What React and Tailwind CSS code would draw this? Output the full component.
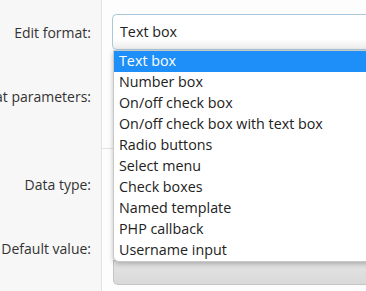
import React from "react";

const options = [
  "Text box",
  "Number box",
  "On/off check box",
  "On/off check box with text box",
  "Radio buttons",
  "Select menu",
  "Check boxes",
  "Named template",
  "PHP callback",
  "Username input",
];

function Label({ children, className }) {
  return (
    <div className={`flex items-center justify-end pr-[10px] text-[14px] text-[#333] ${className}`}>
      <span className="whitespace-nowrap">{children}</span>
    </div>
  );
}

export default function App() {
  return (
    <div
      className="relative w-[366px] h-[291px] overflow-hidden bg-white flex"
      style={{ fontFamily: '"Segoe UI", "Open Sans", "Noto Sans", sans-serif' }}
    >
      {/* Labels column */}
      <div className="w-[102px] shrink-0 bg-[#f7f7f7] border-r border-[#e2e2e2] flex flex-col overflow-hidden">
        <Label className="h-[64px] pt-[1px]">Edit format:</Label>
        <Label className="h-[66px] pb-[2px]">Format parameters:</Label>
        <Label className="h-[86px] pt-[22px]">Data type:</Label>
        <Label className="h-[66px] pb-[1px]">Default value:</Label>
      </div>

      {/* Fields column */}
      <div className="flex-1 flex flex-col bg-[#fdfdfd]">
        <div className="h-[149px] border-b border-[#e2e2e2] pt-[14px] pl-[10px]">
          <div className="h-[36px] rounded-l-[5px] border border-r-0 border-[#a9c6da] bg-gradient-to-b from-white from-70% to-[#ececec] flex items-center pl-[7px] text-[14.3px] text-[#222]">
            Text box
          </div>
        </div>
        <div className="flex-1 pt-[111px] pl-[11px]">
          <div className="h-[25px] rounded-bl-[5px] border border-r-0 border-[#c4c4c4] bg-gradient-to-b from-[#e4e4e4] to-[#d9d9d9]" />
        </div>
      </div>

      {/* Open dropdown list */}
      <div className="absolute left-[113px] top-[50px] w-[270px] rounded-b-[6px] border border-[#c9c9c9] bg-white shadow-[0_2px_5px_rgba(0,0,0,0.25)] overflow-hidden">
        {options.map((opt, i) => (
          <div
            key={opt}
            className={`h-[21px] flex items-center pl-[5px] text-[14.3px] leading-none whitespace-nowrap ${
              i === 0 ? "bg-[#1e8ff8] text-white" : "text-[#222]"
            }`}
          >
            {opt}
          </div>
        ))}
      </div>
    </div>
  );
}
